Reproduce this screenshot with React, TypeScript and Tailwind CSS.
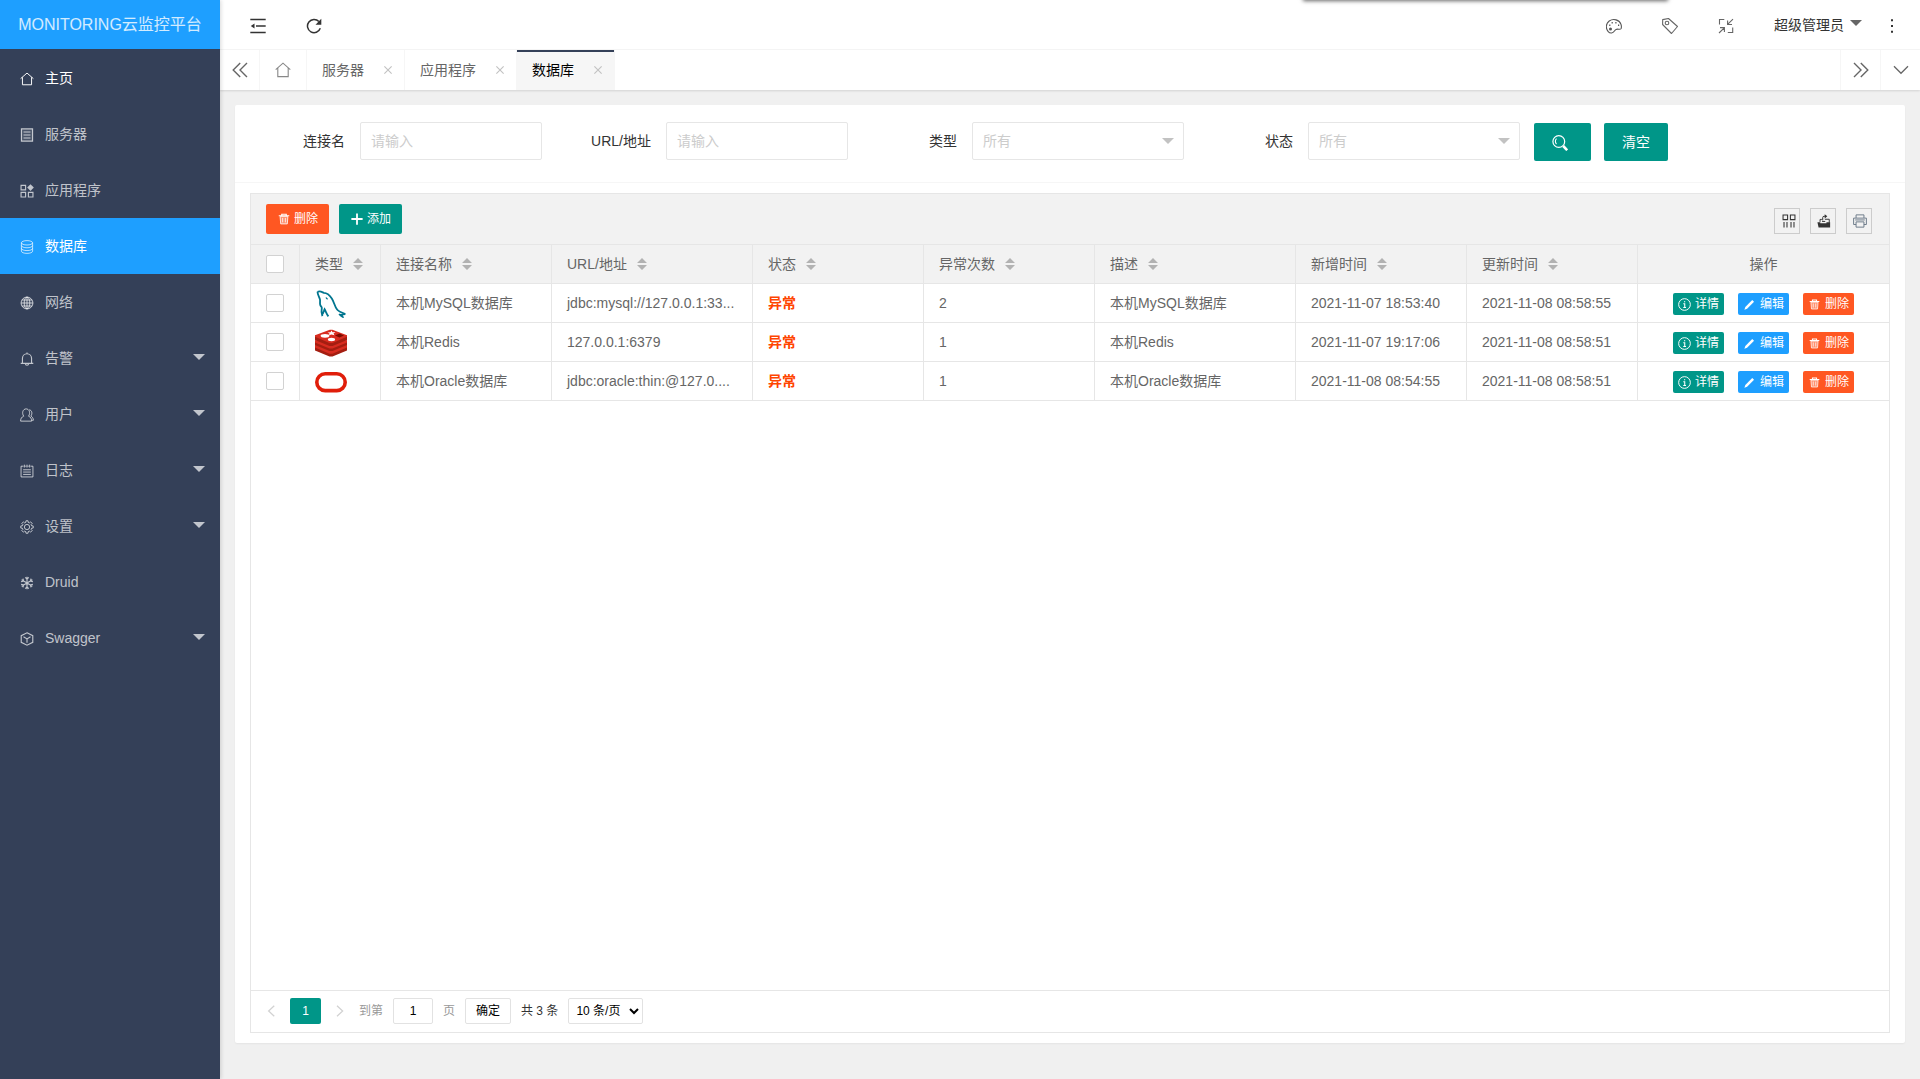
import { useState } from "react";
import type { ReactNode } from "react";
import clsx from "clsx";

interface IconProps {
  className?: string;
  children: ReactNode;
}

function Icon({ className, children }: IconProps) {
  return (
    <svg
      viewBox="0 0 16 16"
      fill="none"
      stroke="currentColor"
      strokeWidth="1.1"
      aria-hidden="true"
      className={clsx("block shrink-0", className)}
    >
      {children}
    </svg>
  );
}

const HomeShape = () => <path d="M.7 7.6 8 1.2l7.3 6.4M2.8 6v8.6h10.4V6" />;

const TrashShape = () => (
  <>
    <path d="M1 3.6h14M5 3.4V1.6h6v1.8" strokeWidth="1.5" />
    <path d="M2.8 4.5h10.4l-.8 10H3.6z" fill="currentColor" fillOpacity="0.35" />
    <path d="M6.2 6.5v6M9.8 6.5v6" />
  </>
);

const menuItems: { label: string; icon: ReactNode; more?: boolean }[] = [
  { label: "主页", icon: <HomeShape /> },
  {
    label: "服务器",
    icon: (
      <>
        <path d="M1.7 1h12.6v14H1.7z" fill="currentColor" fillOpacity="0.15" strokeWidth="1.4" />
        <path d="M4 4.6h8M4 8h8M4 11.4h8" strokeWidth="1.3" />
      </>
    ),
  },
  {
    label: "应用程序",
    icon: (
      <>
        <path d="M1.2 1.5h5.2v5.2H1.2zM1.2 9.6h5.2v5.2H1.2zM9.6 9.6h5.2v5.2H9.6z" strokeWidth="1.3" />
        <path d="m12 .3 3.8 3.8L12 7.9 8.2 4.1z" fill="currentColor" stroke="none" />
      </>
    ),
  },
  {
    label: "数据库",
    icon: (
      <>
        <ellipse cx="8" cy="3.2" rx="6.4" ry="2.5" />
        <path d="M1.6 3.2v9.6c0 1.4 2.9 2.5 6.4 2.5s6.4-1.1 6.4-2.5V3.2M1.6 6.4c0 1.4 2.9 2.5 6.4 2.5s6.4-1.1 6.4-2.5M1.6 9.6c0 1.4 2.9 2.5 6.4 2.5s6.4-1.1 6.4-2.5" />
      </>
    ),
  },
  {
    label: "网络",
    icon: (
      <>
        <circle cx="8" cy="8" r="6.8" fill="currentColor" fillOpacity="0.1" />
        <ellipse cx="8" cy="8" rx="3.2" ry="6.8" />
        <path d="M8 1.2v13.6M1.2 8h13.6M2.2 4.6h11.6M2.2 11.4h11.6" />
      </>
    ),
  },
  {
    label: "告警",
    more: true,
    icon: (
      <path
        d="M.8 13h14.4M2.8 13V7.2a5.2 5.2 0 0 1 10.4 0V13M8 .6V2M6.2 13.4a1.8 1.8 0 0 0 3.6 0"
        strokeWidth="1.3"
      />
    ),
  },
  {
    label: "用户",
    more: true,
    icon: (
      <>
        <path d="M.7 15c0-3 1.2-4.7 3.5-5.6C1.7 5.4 3.5 1 7 1s5.3 4.4 2.8 8.4c2.3.9 3.5 2.6 3.5 5.6z" />
        <path d="M10.6 2c3 .5 4 4.4 1.8 7.3 1.8.9 2.8 2.3 2.9 4.7h-1.6" />
      </>
    ),
  },
  {
    label: "日志",
    more: true,
    icon: (
      <>
        <path d="M4 2.5H1.2v12.3h13.6V2.5H12M6 2.5h1.3M8.7 2.5H10M5 .8V4M8 .8V4M11 .8V4" />
        <path d="M3.6 6.6h8.8M3.6 9.2h8.8M3.6 11.9h8.8" />
      </>
    ),
  },
  {
    label: "设置",
    more: true,
    icon: (
      <>
        <path
          d="M6.8.9h2.4l.2 1.8 1.4.6 1.3-1.2 1.8 1.8-1.2 1.3.6 1.4 1.8.2v2.4l-1.8.2-.6 1.4 1.2 1.3-1.8 1.8-1.3-1.2-1.4.6-.2 1.8H6.8l-.2-1.8-1.4-.6-1.3 1.2-1.8-1.8 1.2-1.3-.6-1.4-1.8-.2V6.800l1.800-.2.6-1.400-1.200-1.300 1.800-1.800 1.300 1.200 1.400-.6z"
          strokeLinejoin="round"
        />
        <circle cx="8" cy="8" r="3" />
      </>
    ),
  },
  {
    label: "Druid",
    icon: (
      <path
        d="M8 .8v14.4M1.8 4.4l12.4 7.2M14.200 4.400 1.800 11.600M6 1.600l2 2 2-2M6 14.400l2-2 2 2M1.200 6.600l2.900-.8-.7-2.900M14.800 9.400l-2.900.8.7 2.900M14.800 6.600l-2.900-.8.7-2.900M1.200 9.400l2.900.8-.7 2.900"
        strokeWidth="1.3"
      />
    ),
  },
  {
    label: "Swagger",
    more: true,
    icon: (
      <path
        d="m8 .9 6.600 3.300v7.600L8 15.100l-6.600-3.300V4.200zM4 5.500l4 2.400 4-2.400M8 7.900v4.500"
        strokeWidth="1.3"
      />
    ),
  },
];

const tabs = ["服务器", "应用程序", "数据库"];

const MySqlLogo = () => (
  <svg viewBox="0 0 32 28" fill="none" stroke="#00758f" strokeWidth="1.8" className="h-7 w-8" aria-label="MySQL">
    <path d="M2.500 1.800c2.700-1.200 4.700.4 6.300 1 3.600.1 5.800 2.200 8 5.600 2.400 3.700 2.700 7.700 5.300 11.100 1.200 1.700 2.800 2.500 8.200 4.700-2 .1-3.300.4-4.300.8.9.7 1.500 1 1.700 1.900-1.700-.6-2.700-1.600-3.500-3" />
    <path d="M2.500 1.800c.1 3.200 2 5.200 2.500 7.800.3 2-.3 3.100.2 5.200.3 1.400 1.500 1.700 1.600 3-.6 3-.3 5.500.6 8.300M7 24.500c1.700-1.600 1.700-3.300 2.600-5.300 1.200 2 1.900 4.700 3.800 7.200" />
    <path d="M11 7.500c.4.800.9 1.300 1.600 1.800" strokeWidth="1.3" />
  </svg>
);

const RedisLogo = () => (
  <svg viewBox="0 0 32 28" className="h-7 w-8" aria-label="Redis">
    <path d="M0 16h32v5.500L17.500 27.600h-3L0 21.500z" fill="#a41e11" />
    <path d="M0 16h32v2.500l-14.500 6.200h-3L0 18.500z" fill="#d82c20" />
    <path d="M0 11.500h32V16l-14.500 6h-3L0 16z" fill="#a41e11" />
    <path d="M0 11.300h32v2.200l-14.500 6h-3L0 13.500z" fill="#d82c20" />
    <path d="M0 6.500h32V11l-14.500 6h-3L0 11z" fill="#a41e11" />
    <path d="M0 6.300 14.800.7h2.600L32 6.300v1.500L17.500 14h-3L0 7.800z" fill="#d82c20" />
    <path d="m16.500 1.500 1 1.700 3-.2-2 1.600 1 1.600-3-.8-2.500.8.5-1.600-2-1.100 3-.3z" fill="#fff" />
    <ellipse cx="10" cy="6.800" rx="4.400" ry="1.900" fill="#fff" />
    <ellipse cx="16.500" cy="10.500" rx="3.600" ry="1.700" fill="#fff" />
    <path d="m20 6.600 4.500-2 4.500 2-4.500 2z" fill="#7a0c00" />
  </svg>
);

const OracleLogo = () => (
  <svg viewBox="0 0 32 28" fill="none" className="h-7 w-8" aria-label="Oracle">
    <rect x="1.800" y="5.800" width="28.400" height="16.800" rx="8.400" stroke="#e01e0a" strokeWidth="3.600" />
  </svg>
);

const columns = [
  { title: "类型", width: "w-[81px]" },
  { title: "连接名称", width: "w-[171px]" },
  { title: "URL/地址", width: "w-[201px]" },
  { title: "状态", width: "w-[171px]" },
  { title: "异常次数", width: "w-[171px]" },
  { title: "描述", width: "w-[201px]" },
  { title: "新增时间", width: "w-[171px]" },
  { title: "更新时间", width: "w-[171px]" },
];

const rows = [
  {
    logo: <MySqlLogo />,
    name: "本机MySQL数据库",
    url: "jdbc:mysql://127.0.0.1:33...",
    count: 2,
    created: "2021-11-07 18:53:40",
    updated: "2021-11-08 08:58:55",
  },
  {
    logo: <RedisLogo />,
    name: "本机Redis",
    url: "127.0.0.1:6379",
    count: 1,
    created: "2021-11-07 19:17:06",
    updated: "2021-11-08 08:58:51",
  },
  {
    logo: <OracleLogo />,
    name: "本机Oracle数据库",
    url: "jdbc:oracle:thin:@127.0....",
    count: 1,
    created: "2021-11-08 08:54:55",
    updated: "2021-11-08 08:58:51",
  },
];

function Caret({ className }: { className?: string }) {
  return (
    <svg viewBox="0 0 12 6" fill="currentColor" aria-hidden="true" className={clsx("h-1.5 w-3", className)}>
      <path d="M0 0h12L6 6z" />
    </svg>
  );
}

function Sidebar() {
  return (
    <aside className="z-10 w-[220px] shrink-0 bg-[#344058] shadow-[1px_0_4px_rgba(0,0,0,0.15)]">
      <div className="flex h-[49px] items-center justify-center bg-[#1e9fff] text-base text-white/80">
        MONITORING云监控平台
      </div>
      <nav className="pt-px">
        {menuItems.map((item) => (
          <a
            key={item.label}
            href="#"
            className={clsx(
              "flex h-14 items-center pr-[15px] pl-5 text-sm",
              item.label === "数据库" && "bg-[#1e9fff] text-white",
              item.label === "主页" && "text-white",
              item.label !== "数据库" && item.label !== "主页" && "text-white/70"
            )}
          >
            <Icon className={clsx("mt-0.5 h-3.5 w-3.5", item.label === "数据库" && "text-white/70")}>
              {item.icon}
            </Icon>
            <span className="ml-[11px]">{item.label}</span>
            {item.more && <Caret className="mb-0.5 ml-auto text-white/70" />}
          </a>
        ))}
      </nav>
    </aside>
  );
}

function Header() {
  return (
    <header className="flex h-[50px] items-center border-b border-[#f6f6f6] bg-white pt-0.5 pr-5 pl-[30px] text-[#333]">
      <button type="button" aria-label="侧边伸缩" className="mr-10">
        <Icon className="h-4 w-4">
          <path d="M.3 1.500h15.400M6 8h9.700M.3 14.500h15.400" strokeWidth="1.4" />
          <path d="M4.500 5.600v4.800L.8 8z" fill="currentColor" stroke="none" />
        </Icon>
      </button>
      <button type="button" aria-label="刷新">
        <Icon className="h-4 w-4">
          <path d="M14.300 10.300A6.600 6.600 0 1 1 12.900 3.500" strokeWidth="1.5" />
          <path d="M15.300.8v5.900H9.500z" fill="currentColor" stroke="none" />
        </Icon>
      </button>

      <div className="ml-auto flex items-center">
        <button type="button" aria-label="主题" className="mr-10 text-[#555]">
          <Icon className="h-4 w-4">
            <path d="M2.200 13.600C-.6 10.400-.2 5.400 3.200 3 7.400.2 13.500 1.700 15 6.400c.5 1.700.5 3.300 0 4.300-1 1.400-3.400-.3-5.200.9-1.500 1-1.800 3-4.200 3.400-1.300.2-2.500-.4-3.400-1.400z" />
            <circle cx="4.500" cy="10.900" r="1.500" fill="currentColor" stroke="none" />
            <path d="M3.200 7.300h1.200M5.600 4.700h1.200M9.300 4.700h1.200M12 7.300h1.200" strokeWidth="1.4" />
          </Icon>
        </button>
        <button type="button" aria-label="便签" className="mr-10 text-[#666]">
          <Icon className="h-4 w-4">
            <path d="M.7 1.600 6.500.5l9 8-6 7L.6 6.500z" strokeLinejoin="round" />
            <circle cx="5" cy="5" r="1.800" />
          </Icon>
        </button>
        <button type="button" aria-label="退出全屏" className="mr-10 text-[#666]">
          <Icon className="h-4 w-4">
            <path d="M1.500 6.500v-5h4.800M14.700 9.500v5H9.800M15 1.200 9.600 6.400M9.600 2.500v4H14M1 15l5.300-5.200M2 9.600h4.400V14" />
          </Icon>
        </button>
        <button type="button" className="mb-0.5 flex items-center text-sm">
          超级管理员
          <Caret className="mb-1 ml-1.5 text-[#666]" />
        </button>
        <button type="button" aria-label="更多" className="ml-[22px]">
          <Icon className="h-4 w-4">
            <path d="M7 1.200h2v2H7zM7 7h2v2H7zM7 12.800h2v2H7z" fill="currentColor" stroke="none" />
          </Icon>
        </button>
      </div>
    </header>
  );
}

function TabBar() {
  return (
    <div className="flex h-10 bg-white text-sm text-[#666] shadow-[0_1px_2px_rgba(0,0,0,0.12)]">
      <button type="button" aria-label="向左" className="flex w-10 items-center justify-center border-r border-[#f6f6f6]">
        <Icon className="h-4 w-4">
          <path d="M8.200 1 1.200 8l7 7M15 1 8 8l7 7" strokeWidth="1.4" />
        </Icon>
      </button>
      <button type="button" aria-label="主页" className="flex w-[47px] items-center justify-center border-r border-[#f6f6f6]">
        <Icon className="h-4 w-4 text-[#888]">
          <HomeShape />
        </Icon>
      </button>
      {tabs.map((tab) => (
        <div
          key={tab}
          className={clsx(
            "relative flex items-center border-r border-[#f6f6f6] pr-3 pl-[15px]",
            tab === "数据库" && "bg-[#f6f6f6] text-black"
          )}
        >
          {tab === "数据库" && <span className="absolute inset-x-0 top-0 h-0.5 bg-[#344058]" />}
          <a href="#">{tab}</a>
          <button type="button" aria-label={`关闭${tab}`} className="ml-5 text-[#c2c2c2]">
            <Icon className="h-2 w-2">
              <path d="m.7.7 14.600 14.600M15.300.7.7 15.300" strokeWidth="2.2" />
            </Icon>
          </button>
        </div>
      ))}
      <button type="button" aria-label="向右" className="ml-auto flex w-10 items-center justify-center border-l border-[#f6f6f6]">
        <Icon className="h-4 w-4">
          <path d="m1 1 7 7-7 7M7.800 1l7 7-7 7" strokeWidth="1.4" />
        </Icon>
      </button>
      <button type="button" aria-label="标签操作" className="flex w-10 items-center justify-center border-l border-[#f6f6f6]">
        <Icon className="h-4 w-4">
          <path d="m1 4.300 7 7 7-7" strokeWidth="1.3" />
        </Icon>
      </button>
    </div>
  );
}

function SearchField({ id, label, select }: { id: string; label: string; select?: boolean }) {
  return (
    <div className="mr-[14px] flex items-center">
      <label htmlFor={id} className="w-[110px] pr-[15px] text-right text-[#333]">
        {label}
      </label>
      {select ? (
        <div className="relative">
          <select
            id={id}
            className="h-[38px] w-[212px] appearance-none rounded-xs border border-[#e6e6e6] bg-white pl-2.5 text-[#ccc]"
          >
            <option>所有</option>
          </select>
          <Caret className="pointer-events-none absolute top-4 right-2.5 text-[#c2c2c2]" />
        </div>
      ) : (
        <input
          id={id}
          placeholder="请输入"
          className="h-[38px] w-[182px] rounded-xs border border-[#e6e6e6] bg-white pl-2.5 placeholder:text-[#ccc]"
        />
      )}
    </div>
  );
}

function SearchForm() {
  return (
    <form className="flex h-[78px] items-start border-b border-[#f6f6f6] px-[15px] pt-[17px] text-sm">
      <SearchField id="connName" label="连接名" />
      <SearchField id="url" label="URL/地址" />
      <SearchField id="dbType" label="类型" select />
      <SearchField id="state" label="状态" select />
      <button
        type="button"
        aria-label="搜索"
        className="mt-px mr-[13px] flex h-[38px] w-[57px] items-center rounded-xs bg-[#009688] pt-0.5 pl-[18px] text-white"
      >
        <Icon className="h-4 w-4">
          <circle cx="6.800" cy="6.500" r="5.900" strokeWidth="1.2" />
          <path d="M4.500 3.700a3.700 3.700 0 0 0 0 5.300" />
          <path d="m11.200 11 4 4.200" strokeWidth="2.6" />
        </Icon>
      </button>
      <button type="button" className="mt-px h-[38px] w-16 rounded-xs bg-[#009688] text-white">
        清空
      </button>
    </form>
  );
}

function Toolbar() {
  const tool = "flex h-[26px] w-[26px] items-center justify-center border border-[#ccc] text-[#333]";
  return (
    <div className="flex h-[51px] items-center border-b border-[#e6e6e6] bg-[#f2f2f2] pr-[17px] pl-[15px] text-xs text-white">
      <button type="button" className="mr-2.5 flex h-[30px] w-[63px] items-center gap-1 rounded-xs bg-[#ff5722] pl-3">
        <Icon className="h-3 w-3">
          <TrashShape />
        </Icon>
        删除
      </button>
      <button type="button" className="flex h-[30px] w-[63px] items-center gap-1 rounded-xs bg-[#009688] pl-3">
        <Icon className="h-3 w-3">
          <path d="M8 .5v15M.5 8h15" strokeWidth="2.4" />
        </Icon>
        添加
      </button>
      <div className="ml-auto flex gap-2.5 pt-1">
        <button type="button" aria-label="筛选列" className={tool}>
          <Icon className="ml-1 h-3.5 w-3.5">
            <path d="M1.200 1.200h5.200v5.200H1.200zM9.600 1.200h5.200v5.200H9.600zM2.300 9v6.500M5.700 9v6.500M10.300 9v6.500M13.700 9v6.500" strokeWidth="1.2" />
          </Icon>
        </button>
        <button type="button" aria-label="导出" className={tool}>
          <Icon className="ml-0.5 h-3.5 w-3.5">
            <path d="M.5 9.500h3.300v1.200h7V9.500H15v5.800H1.800z" fill="currentColor" stroke="none" />
            <path d="M3.500 9V6.200h2M9 6h5v4M5.800 8.500h3.600M6.500 7.300V4.200a1.600 1.600 0 0 1 1.600-1.600h1.500" />
            <path d="M8.800.2 11.800 2.600 8.800 5z" fill="currentColor" stroke="none" />
          </Icon>
        </button>
        <button type="button" aria-label="打印" className={tool}>
          <Icon className="ml-0.5 h-3.5 w-3.5 text-[#6b7a88]">
            <path d="M3.500 4.500V1h9v3.500M3.500 12H.7V4.700h14.600V12h-2.800" />
            <path d="M3.500 9h9v6h-9z" />
            <path d="M2.500 6.800h11" />
          </Icon>
        </button>
      </div>
    </div>
  );
}

function RowActions() {
  const action = "flex h-[22px] w-[51px] items-center rounded-xs text-xs text-white";
  return (
    <div className="flex justify-center gap-3.5 pt-0.5">
      <button type="button" className={clsx(action, "gap-1 bg-[#009688] pl-[5px]")}>
        <Icon className="h-[13px] w-[13px]">
          <circle cx="8" cy="8" r="7.200" strokeWidth="1.2" />
          <path d="M6.500 7h1.800v4.600M6.500 11.800h3.400M7.400 4.500h1.500" strokeWidth="1.3" />
        </Icon>
        详情
      </button>
      <button type="button" className={clsx(action, "gap-[5px] bg-[#1e9fff] pl-1.5")}>
        <Icon className="h-[11px] w-[11px]">
          <path d="m.6 15.500 1.300-3.800L12 1.600l2.600 2.500-10.100 10z" fill="currentColor" stroke="none" />
        </Icon>
        编辑
      </button>
      <button type="button" className={clsx(action, "gap-[5px] bg-[#ff5722] pl-1.5")}>
        <Icon className="h-[11px] w-[11px]">
          <TrashShape />
        </Icon>
        删除
      </button>
    </div>
  );
}

const checkboxClass =
  "block h-[18px] w-[18px] appearance-none rounded-xs border border-[#d2d2d2] bg-white checked:border-[#5fb878] checked:bg-[#5fb878]";

function DataTable() {
  const [selected, setSelected] = useState<string[]>([]);
  const cell = "h-[39px] border-r border-b border-[#e6e6e6] px-[15px] whitespace-nowrap";

  const toggle = (name: string) =>
    setSelected((prev) => (prev.includes(name) ? prev.filter((n) => n !== name) : [...prev, name]));

  return (
    <table className="w-full table-fixed border-separate border-spacing-0 text-left text-sm text-[#666]">
      <thead className="bg-[#f2f2f2]">
        <tr>
          <th className={clsx(cell, "w-[49px]")}>
            <input
              type="checkbox"
              aria-label="全选"
              className={checkboxClass}
              checked={selected.length === rows.length}
              onChange={(e) => setSelected(e.target.checked ? rows.map((r) => r.name) : [])}
            />
          </th>
          {columns.map((col) => (
            <th key={col.title} className={clsx(cell, col.width, "font-normal")}>
              <span className="flex items-center">
                {col.title}
                <svg viewBox="0 0 10 12" fill="#b2b2b2" className="ml-2.5 h-3 w-2.5" aria-hidden="true">
                  <path d="M0 5h10L5 0zM0 7h10l-5 5z" />
                </svg>
              </span>
            </th>
          ))}
          <th className="h-[39px] border-b border-[#e6e6e6] text-center font-normal">操作</th>
        </tr>
      </thead>
      <tbody>
        {rows.map((row) => (
          <tr key={row.name}>
            <td className={cell}>
              <input
                type="checkbox"
                aria-label={row.name}
                className={checkboxClass}
                checked={selected.includes(row.name)}
                onChange={() => toggle(row.name)}
              />
            </td>
            <td className={cell}>
              <div className="pt-0.5">{row.logo}</div>
            </td>
            <td className={cell}>{row.name}</td>
            <td className={cell}>{row.url}</td>
            <td className={clsx(cell, "font-bold text-[#ff4500]")}>异常</td>
            <td className={cell}>{row.count}</td>
            <td className={cell}>{row.name}</td>
            <td className={cell}>{row.created}</td>
            <td className={cell}>{row.updated}</td>
            <td className="h-[39px] border-b border-[#e6e6e6]">
              <RowActions />
            </td>
          </tr>
        ))}
      </tbody>
    </table>
  );
}

function Pagination() {
  return (
    <div className="flex h-[42px] items-start border-t border-[#e6e6e6] pt-[7px] pl-[15px] text-xs leading-[26px] text-[#333]">
      <button type="button" aria-label="上一页" className="flex h-[26px] w-6 items-center text-[#d2d2d2]">
        <Icon className="h-3 w-3">
          <path d="M11 1 3.500 8l7.500 7" strokeWidth="1.7" />
        </Icon>
      </button>
      <button type="button" className="h-[26px] w-[31px] rounded-xs bg-[#009688] text-white">
        1
      </button>
      <button type="button" aria-label="下一页" className="flex h-[26px] w-[38px] items-center pl-[13px] text-[#d2d2d2]">
        <Icon className="h-3 w-3">
          <path d="m4 1 7.500 7L4 15" strokeWidth="1.7" />
        </Icon>
      </button>
      <label htmlFor="pageNo" className="text-[#999]">
        到第
      </label>
      <input
        id="pageNo"
        defaultValue="1"
        className="mx-2.5 h-[26px] w-10 rounded-xs border border-[#e2e2e2] text-center text-black"
      />
      <span className="text-[#999]">页</span>
      <button type="button" className="mx-2.5 h-[26px] w-[46px] rounded-xs border border-[#e2e2e2] leading-6 text-black">
        确定
      </button>
      <span>共 3 条</span>
      <select aria-label="每页条数" className="ml-2.5 h-[26px] w-[75px] rounded-xs border border-[#e2e2e2] bg-white px-[3px] text-black">
        <option>10 条/页</option>
        <option>20 条/页</option>
      </select>
    </div>
  );
}

export default function App() {
  return (
    <div className="relative flex min-h-screen overflow-hidden bg-[#f0f0f0] font-['Liberation_Sans','Noto_Sans_CJK_SC',sans-serif]">
      <Sidebar />
      <div className="flex min-w-0 flex-1 flex-col">
        <Header />
        <TabBar />
        <main className="flex flex-1 flex-col px-[15px] pt-[15px] pb-9">
          <div className="flex flex-1 flex-col rounded-xs bg-white shadow-[0_1px_2px_rgba(0,0,0,0.05)]">
            <SearchForm />
            <div className="mx-[15px] mt-2.5 mb-2.5 flex flex-1 flex-col border border-[#e6e6e6]">
              <Toolbar />
              <div className="flex-1">
                <DataTable />
              </div>
              <Pagination />
            </div>
          </div>
        </main>
      </div>
      {/* 顶部收起面板的阴影 */}
      <div className="absolute -top-4 right-[252px] h-4 w-[365px] shadow-[0_1px_4px_rgba(0,0,0,0.6)]" />
    </div>
  );
}
